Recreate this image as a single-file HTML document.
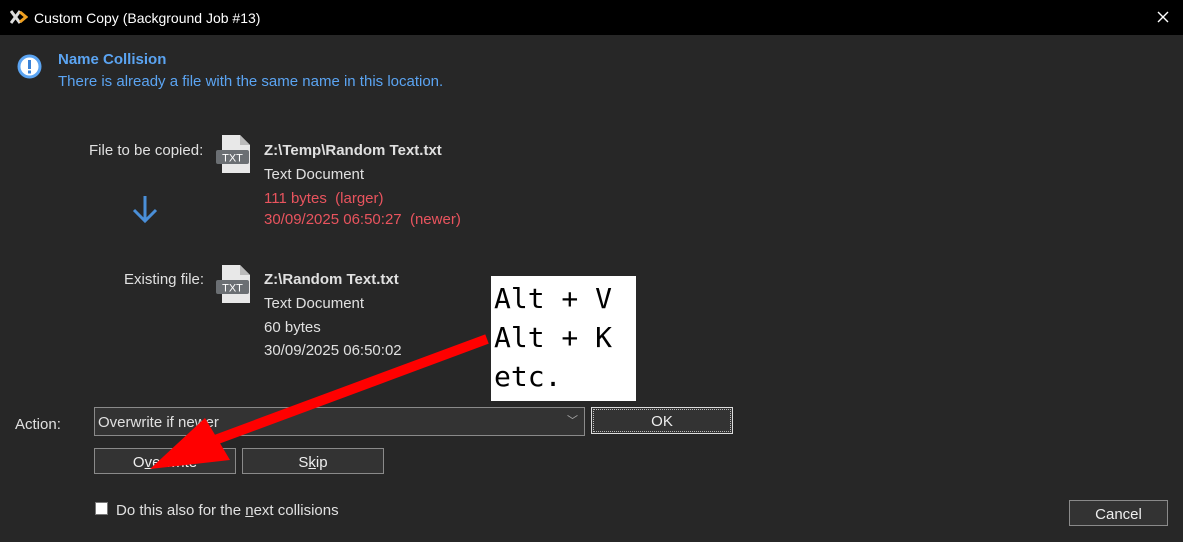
<!DOCTYPE html>
<html><head><meta charset="utf-8"><style>
*{margin:0;padding:0;box-sizing:border-box}
body{width:1183px;height:542px;background:#272727;font-family:"Liberation Sans",sans-serif;color:#e0e0e0;position:relative;overflow:hidden;font-size:15px}
.a{position:absolute;white-space:nowrap}
.tb{position:absolute;left:0;top:0;width:1183px;height:35px;background:#000}
.btn{position:absolute;border:1px solid #8a8a8a;background:#333;color:#eee;text-align:center;font-size:15px}
.red{color:#e9545e}
.b{font-weight:bold}
.blue{color:#5ba4f2}
</style></head><body>
<div class="tb"></div>
<svg class="a" style="left:10px;top:10px" width="18" height="15" viewBox="0 0 18 15"><path d="M1 1 L10 13 M10 1 L1 13" stroke="#ddd" stroke-width="3"/><path d="M10 2 L16 7 L10 12" stroke="#f0a020" stroke-width="3" fill="none"/></svg>
<div class="a" style="left:34px;top:10px;color:#fff;font-size:14px">Custom Copy (Background Job #13)</div>
<svg class="a" style="left:1157px;top:11px" width="12" height="12"><path d="M1 1 L11 11 M11 1 L1 11" stroke="#fff" stroke-width="1.4"/></svg>
<svg class="a" style="left:17px;top:54px" width="25" height="25"><circle cx="12.5" cy="12.5" r="12" fill="#5ba4f2"/><circle cx="12.5" cy="12.5" r="9" fill="#fff"/><rect x="11" y="6" width="3" height="9" fill="#3b82d6"/><rect x="11" y="16.5" width="3" height="3" fill="#3b82d6"/></svg>
<div class="a blue b" style="left:58px;top:51px;font-size:15px">Name Collision</div>
<div class="a blue" style="left:58px;top:73px">There is already a file with the same name in this location.</div>

<div class="a" style="left:89px;top:142px">File to be copied:</div>
<svg class="a" style="left:216px;top:134px" width="36" height="40"><path d="M6 1 H24 L34 11 V39 H6 Z" fill="#e8e8e8"/><path d="M24 1 V11 H34" fill="#bbb"/><rect x="0" y="16" width="33" height="14" rx="2" fill="#6b6f73"/><text x="16.5" y="27.5" font-size="11" fill="#fff" text-anchor="middle" font-family="Liberation Sans">TXT</text></svg>
<div class="a b" style="left:264px;top:142px">Z:\Temp\Random Text.txt</div>
<div class="a" style="left:264px;top:166px">Text Document</div>
<div class="a red" style="left:264px;top:190px">111 bytes&nbsp; (larger)</div>
<div class="a red" style="left:264px;top:211px">30/09/2025 06:50:27&nbsp; (newer)</div>
<svg class="a" style="left:130px;top:194px" width="30" height="30"><path d="M15 2 V27 M4 16 L15 27 L26 16" stroke="#4a8fd8" stroke-width="3" fill="none"/></svg>

<div class="a" style="left:124px;top:271px">Existing file:</div>
<svg class="a" style="left:216px;top:264px" width="36" height="40"><path d="M6 1 H24 L34 11 V39 H6 Z" fill="#e8e8e8"/><path d="M24 1 V11 H34" fill="#bbb"/><rect x="0" y="16" width="33" height="14" rx="2" fill="#6b6f73"/><text x="16.5" y="27.5" font-size="11" fill="#fff" text-anchor="middle" font-family="Liberation Sans">TXT</text></svg>
<div class="a b" style="left:264px;top:271px">Z:\Random Text.txt</div>
<div class="a" style="left:264px;top:295px">Text Document</div>
<div class="a" style="left:264px;top:319px">60 bytes</div>
<div class="a" style="left:264px;top:342px">30/09/2025 06:50:02</div>

<div class="a" style="left:15px;top:416px">Action:</div>
<div class="a" style="left:94px;top:407px;width:491px;height:29px;border:1px solid #8a8a8a;background:#333;padding:6px 3px;font-size:15px">Overwrite if newer<span style="position:absolute;right:6px;top:4px;font-size:11px;color:#aaa">﹀</span></div>
<div class="btn" style="left:591px;top:407px;width:142px;height:27px;border:1px solid #ddd;outline:1px dotted #bbb;outline-offset:-3px;padding-top:5px">OK</div>
<div class="btn" style="left:94px;top:448px;width:142px;height:26px;padding-top:5px">O<u>v</u>erwrite</div>
<div class="btn" style="left:242px;top:448px;width:142px;height:26px;padding-top:5px">S<u>k</u>ip</div>
<div class="a" style="left:95px;top:502px;width:13px;height:13px;background:#fff;border:1px solid #777"></div>
<div class="a" style="left:116px;top:502px">Do this also for the <u>n</u>ext collisions</div>
<div class="btn" style="left:1069px;top:500px;width:99px;height:26px;padding-top:5px">Cancel</div>

<div class="a" style="left:491px;top:276px;width:145px;height:125px;background:#fff;color:#000;font-family:'DejaVu Sans Mono','Liberation Mono',monospace;font-size:28px;line-height:39px;padding:3px 0 0 3px">Alt + V<br>Alt + K<br>etc.</div>
<svg class="a" style="left:0;top:0" width="1183" height="542"><line x1="487" y1="339" x2="215" y2="440" stroke="#f00" stroke-width="10"/><polygon points="150,469 205,418 230,460" fill="#f00"/></svg>
</body></html>
